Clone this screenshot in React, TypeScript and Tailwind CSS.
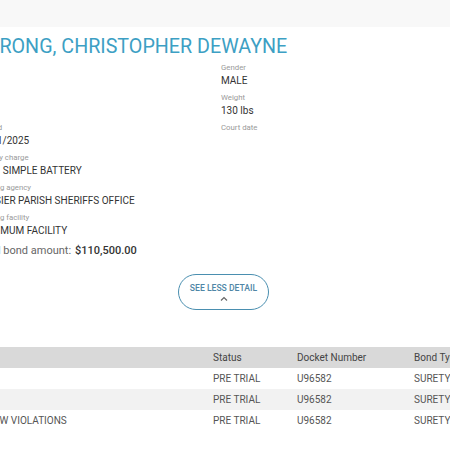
const left = [
  { label: 'Age', value: '34' },
  { label: 'Race', value: 'W' },
  { label: 'Booked', value: '01/11/2025' },
  { label: 'Primary charge', value: '14:3\u00a0\u00a0\u00a0SIMPLE BATTERY' },
  { label: 'Booking agency', value: 'BOSSIER PARISH SHERIFFS OFFICE' },
  { label: 'Booking facility', value: 'MAXIMUM FACILITY' },
];

const right = [
  { label: 'Gender', value: 'MALE' },
  { label: 'Weight', value: '130 lbs' },
  { label: 'Court date', value: '' },
];

const charges = [
  { charge: '14:35 SIMPLE BATTERY', status: 'PRE TRIAL', docket: 'U96582', bond: 'SURETY' },
  { charge: '14:67 THEFT', status: 'PRE TRIAL', docket: 'U96582', bond: 'SURETY' },
  { charge: '32:123 MOTOR VEHICLE LAW VIOLATIONS', status: 'PRE TRIAL', docket: 'U96582', bond: 'SURETY' },
];

function Field({ label, value }: { label: string; value: string }) {
  return (
    <div className="flex flex-col">
      <span className="h-[10px] text-[7.8px] leading-[10px] whitespace-nowrap text-[#9a9a9a]">{label}</span>
      <span className="h-[16px] text-[10px] leading-[16px] whitespace-nowrap text-[#333]">{value}</span>
    </div>
  );
}

export default function App() {
  return (
    <div className="h-[450px] w-[450px] overflow-hidden bg-white font-['Roboto',sans-serif]">
      <div className="h-[27px] bg-[#f8f8f8]" />

      <div className="-ml-[24px] w-[520px]">
        <h1 className="mt-[6px] h-[28px] text-[19.7px] leading-[28px] whitespace-nowrap text-[#3d9fc4]">
          STRONG, CHRISTOPHER DEWAYNE
        </h1>

        {/* Details */}
        <div className="mt-[2px] flex">
          <div className="flex w-[245px] flex-col gap-[4px]">
            {left.map((f) => (
              <Field key={f.label} {...f} />
            ))}
          </div>
          <div className="flex flex-col gap-[4px]">
            {right.map((f) => (
              <Field key={f.label} {...f} />
            ))}
          </div>
        </div>

        <div className="mt-[4px] h-[16px] text-[11px] leading-[16px] whitespace-nowrap">
          <span className="text-[#666]">Total bond amount:</span>
          <span className="ml-[4px] font-medium text-[#333]">$110,500.00</span>
        </div>

        <div className="mt-[15px] pl-[202px]">
          <button className="flex h-[36px] w-[91px] flex-col items-center justify-center gap-[3px] rounded-full border-[1.5px] border-[#4a8fb0] bg-white">
            <span className="text-[8.6px] leading-[10px] font-medium whitespace-nowrap text-[#4f86a6]">SEE LESS DETAIL</span>
            <svg width="8" height="5" viewBox="0 0 8 5" fill="none">
              <polyline points="1,4.5 4,1.5 7,4.5" stroke="#666" strokeWidth="1.2" />
            </svg>
          </button>
        </div>
      </div>

      {/* Charges */}
      <div className="mt-[37px] -ml-[132px]">
        <table className="w-[688px] table-fixed border-collapse text-[10px]">
          <colgroup>
            <col className="w-[337px]" />
            <col className="w-[84px]" />
            <col className="w-[117px]" />
            <col className="w-[150px]" />
          </colgroup>
          <thead>
            <tr className="h-[21px] bg-[#d9d9d9] text-left text-[#444]">
              <th className="px-[8px] font-normal">Charge</th>
              <th className="px-[8px] font-normal">Status</th>
              <th className="px-[8px] font-normal">Docket Number</th>
              <th className="px-[8px] font-normal">Bond Type</th>
            </tr>
          </thead>
          <tbody className="text-[#555]">
            {charges.map((c, i) => (
              <tr key={i} className={i % 2 === 1 ? 'h-[21px] bg-[#f2f2f2]' : 'h-[21px] bg-white'}>
                <td className="px-[8px] whitespace-nowrap">{c.charge}</td>
                <td className="px-[8px] whitespace-nowrap">{c.status}</td>
                <td className="px-[8px] whitespace-nowrap">{c.docket}</td>
                <td className="px-[8px] whitespace-nowrap">{c.bond}</td>
              </tr>
            ))}
          </tbody>
        </table>
      </div>
    </div>
  );
}
